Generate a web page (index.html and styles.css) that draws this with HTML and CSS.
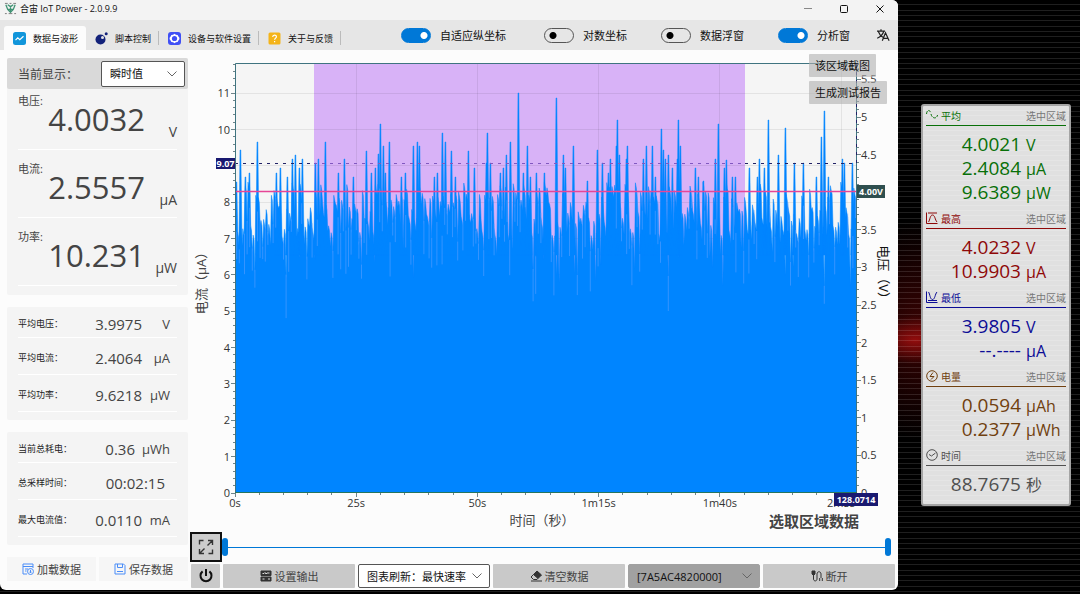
FILE: index.html
```html
<!DOCTYPE html>
<html lang="zh-CN">
<head>
<meta charset="utf-8">
<meta name="viewport" content="width=device-width, initial-scale=1">
<title>合宙 IoT Power - 2.0.9.9</title>
<link rel="stylesheet" href="styles.css">
</head>
<body>
<div class="desktop">
  <main class="window">
    <header class="titlebar">
      <svg class="logo" viewBox="0 0 14 14" fill="none" stroke="#3f9273"><path d="M1 1.5h3M6 1.5h2M10 1.5h3M1 12.5h2M5 12.5h4M11 12.5h2" stroke="#777"/><path d="M2 3l2 5 3 3 3-3 2-5M4 3l3 2 3-2M4 8h6M7 5v6" stroke-width="1.4"/></svg>
      <h1 class="title">合宙 IoT Power - 2.0.9.9</h1>
      <button class="win-btn" aria-label="最小化"><svg viewBox="0 0 10 10"><path d="M1 4.500h8" stroke="#888"/></svg></button>
      <button class="win-btn" aria-label="最大化"><svg viewBox="0 0 10 10"><rect x="1.500" y="1.500" width="7" height="7" rx="1" stroke="#111"/></svg></button>
      <button class="win-btn" aria-label="关闭"><svg viewBox="0 0 10 10"><path d="M1.500 1.500l7 7m0-7l-7 7" stroke="#111"/></svg></button>
    </header>

    <div class="toolbar">
      <nav class="tabs">
        <button class="tab tab-active"><svg class="tab-icon" viewBox="0 0 13 13"><rect width="13" height="13" rx="2.500" fill="#1296db"/><path d="M2.500 8.200l2.300-2.400 2 1.800 3.700-3.300" fill="none" stroke="#fff" stroke-width="1.200"/></svg>数据与波形</button>
        <button class="tab"><svg class="tab-icon" viewBox="0 0 13 13"><circle cx="5.500" cy="7.500" r="5" fill="#13227a"/><circle cx="7.500" cy="5.500" r="1.500" fill="#e6e6e6"/><circle cx="11.200" cy="1.800" r="1.500" fill="#13227a"/></svg>脚本控制</button>
        <button class="tab"><svg class="tab-icon" viewBox="0 0 13 13"><rect width="13" height="13" rx="3" fill="#4050f5"/><path d="M6.500 1.800l1.400 1 1.700.1.800 1.500 1 1.300v1.600l-1 1.300-.8 1.500-1.700.1-1.400 1-1.400-1-1.700-.1-.8-1.500-1-1.300V5.700l1-1.300.8-1.500 1.700-.1z" fill="#fff"/><circle cx="6.500" cy="6.500" r="2.600" fill="#4050f5"/></svg>设备与软件设置</button>
        <button class="tab"><svg class="tab-icon" viewBox="0 0 13 13"><rect x=".5" y=".5" width="12" height="12" rx="1.500" fill="#f4b41a"/><path d="M4.700 5c0-2.500 3.800-2.400 3.700-.2 0 1.300-1.800 1.400-1.800 3M6.600 9v1.300" fill="none" stroke="#fff" stroke-width="1.200"/></svg>关于与反馈</button>
      </nav>
      <div class="switches">
        <label class="switch switch-wide"><input type="checkbox" checked>自适应纵坐标</label>
        <label class="switch"><input type="checkbox">对数坐标</label>
        <label class="switch"><input type="checkbox">数据浮窗</label>
        <label class="switch"><input type="checkbox" checked>分析窗</label>
        <button class="lang" aria-label="语言"><svg viewBox="0 0 14 14" fill="none" stroke="#222" stroke-width="1.200"><path d="M1 3.200h8M5 1.300v1.900M2.300 3.500c1 2.900 3 5 5 6M7.700 3.500c-1 3.200-3.500 5.500-6.500 6.700M6.300 12.800l3.200-8 3.600 8M7.500 10.300h4.500"/></svg></button>
      </div>
    </div>

    <div class="content">
      <aside class="sidebar">
        <section class="card live">
          <div class="mode">
            <label for="mode">当前显示：</label>
            <div class="picker"><select id="mode"><option>瞬时值</option></select><svg viewBox="0 0 10 6"><path d="M.5.5L5 5 9.500.5"/></svg></div>
          </div>
          <div class="reading"><span class="name">电压:</span><span class="num">4.0032</span><span class="unit">V</span></div>
          <div class="reading"><span class="name">电流:</span><span class="num">2.5557</span><span class="unit">μA</span></div>
          <div class="reading"><span class="name">功率:</span><span class="num">10.231</span><span class="unit">μW</span></div>
        </section>
        <section class="card stats">
          <div class="stat"><span>平均电压：</span><b>3.9975</b><i>V</i></div>
          <div class="stat"><span>平均电流：</span><b>2.4064</b><i>μA</i></div>
          <div class="stat"><span>平均功率：</span><b>9.6218</b><i>μW</i></div>
        </section>
        <section class="card stats">
          <div class="stat stat-wide"><span>当前总耗电：</span><b>0.36</b><i>μWh</i></div>
          <div class="stat"><span>总采样时间：</span><b class="clock">00:02:15</b></div>
          <div class="stat"><span>最大电流值：</span><b>0.0110</b><i>mA</i></div>
        </section>
        <div class="files">
          <button><svg viewBox="0 0 12 12"><path d="M11 5V1H1v10h4M1 3.500h10M3 6h3M3 8h1.500"/><circle cx="8.500" cy="8.500" r="3"/><path d="M8.500 6.800v3M7.300 8.700l1.200 1.200 1.200-1.200"/></svg>加载数据</button>
          <button><svg viewBox="0 0 12 12"><path d="M1 1h8.500L11 2.500V11H1zM3.500 1v3.500h5V1M3 8.500h6"/></svg>保存数据</button>
        </div>
      </aside>

      <div class="workspace">
        <div class="plot">
          <svg class="chart" id="chart" viewBox="0 0 708 482" role="img" aria-label="电流与电压波形"></svg>
          <div class="overlay">
            <button>该区域截图</button>
            <button>生成测试报告</button>
          </div>
        </div>
        <div class="range-row">
          <button class="expand" aria-label="全屏"><svg viewBox="0 0 16 16"><path d="M1.500 5.500v-4h4M10 1.500h4.500V6M14.500 10.500v4h-4M6 14.500H1.500V10M14.500 1.500L9.500 6.500M1.500 14.500l5-5"/></svg></button>
          <div class="range">
            <input type="range" min="0" max="100" value="0" aria-label="起点">
            <input type="range" min="0" max="100" value="100" aria-label="终点">
          </div>
        </div>
        <div class="actions">
          <button class="power" aria-label="电源"><svg viewBox="0 0 16 16"><path d="M8 1v7M4.600 3.400a5.500 5.500 0 1 0 6.800 0" stroke-width="2"/></svg></button>
          <button><svg viewBox="0 0 12 12"><path d="M1 1h10v4.500H1zM1 7h10v4H1z" fill="#333"/><path d="M2.500 3.500h1.500l1-1 1 1.500 1-1h2.500M2.500 9h2M8 9h2" stroke="#ddd"/></svg>设置输出</button>
          <div class="picker"><select aria-label="图表刷新"><option>图表刷新：最快速率</option></select><svg viewBox="0 0 10 6"><path d="M.5.5L5 5 9.500.5"/></svg></div>
          <button><svg viewBox="0 0 12 12"><path d="M7 1l4.500 4L8 8.500l-4.500-4z" fill="#333"/><path d="M3.500 4.500L1 7l2.500 2.500H7l1-1M1 11h11"/></svg>清空数据</button>
          <div class="picker picker-dark"><select aria-label="设备"><option>[7A5AC4820000]</option></select><svg viewBox="0 0 10 6"><path d="M.5.5L5 5 9.500.5"/></svg></div>
          <button><svg viewBox="0 0 12 12"><path d="M1 1v3l1.500 1.500L4 4V1z" fill="#333"/><path d="M2.500 5v4c0 2.500 3.500 2.500 3.500 0V4c0-3 4-3 4 0v4M8.700 8v3M11.300 8v3"/></svg>断开</button>
        </div>
      </div>
    </div>
  </main>

  <aside class="analysis">
    <section class="group green">
      <h2><svg viewBox="0 0 12 12"><path d="M.5 5C1 0 4 1 5 4M5 5c1 5 6 5 6.500 1" stroke-dasharray="3 1"/></svg>平均<small>选中区域</small></h2>
      <p><b>4.0021</b>V</p><p><b>2.4084</b>μA</p><p><b>9.6389</b>μW</p>
    </section>
    <section class="group red">
      <h2><svg viewBox="0 0 12 12"><path d="M.5.5v11h11M2 1h9M2.500 10C4 8 4 3 6.500 3S9 8 11 10"/></svg>最高<small>选中区域</small></h2>
      <p><b>4.0232</b>V</p><p><b>10.9903</b>μA</p>
    </section>
    <section class="group blue">
      <h2><svg viewBox="0 0 12 12"><path d="M.5.5v11h11M2 9.500h9M2.500 1C4 3 4 8.500 6.500 8.500S9 3 11 1"/></svg>最低<small>选中区域</small></h2>
      <p><b>3.9805</b>V</p><p><b>--.----</b>μA</p>
    </section>
    <section class="group brown">
      <h2><svg viewBox="0 0 12 12"><circle cx="6" cy="6" r="5.300"/><path d="M7 2.500L4 6.500h4L5 9.500"/></svg>电量<small>选中区域</small></h2>
      <p><b>0.0594</b>μAh</p><p><b>0.2377</b>μWh</p>
    </section>
    <section class="group gray">
      <h2><svg viewBox="0 0 12 12"><circle cx="6" cy="6" r="5.300"/><path d="M3 5.500l2.500 1.500L9.500 4"/></svg>时间<small>选中区域</small></h2>
      <p><b>88.7675</b>秒</p>
    </section>
  </aside>
</div>
<script src="chart.js"></script>
</body>
</html>
```
FILE: styles.css
```css
* { box-sizing: border-box; }
body {
  margin: 0;
  font-family: "Open Sans", "Noto Sans CJK SC", sans-serif;
  color: #444;
  background: #000;
}
button, select, input { font: inherit; color: inherit; margin: 0; }
button { border: 0; padding: 0; background: none; }
svg { display: block; flex: none; fill: none; }
h1, h2, p { margin: 0; font-weight: 400; }
b, i { font-weight: 400; font-style: normal; }

.desktop {
  min-height: 100vh;
  display: grid;
  grid-template-columns: minmax(0, 1fr) 182px;
  align-items: start;
  padding-bottom: 4px;
  background:
    repeating-linear-gradient(transparent 0 4px, rgba(255, 255, 255, .12) 4px 5px, transparent 5px 10px, rgba(255, 255, 255, .12) 10px 11px, transparent 11px 15px, rgba(255, 255, 255, .12) 15px 16px),
    radial-gradient(ellipse 50px 24px at calc(100% - 165px) 340px, rgba(170, 16, 16, .8), transparent),
    radial-gradient(ellipse 80px 110px at calc(100% - 160px) 330px, #3a0303, transparent),
    #000;
}

/* window */
.window { background: #fcfcfc; border-radius: 0 6px 6px 6px; overflow: hidden; }
.titlebar { height: 20px; display: flex; align-items: center; padding: 0 5px 3px 4px; background: #f3f3f3; }
.logo { width: 13px; height: 13px; }
.title { flex: 1; margin-left: 3px; font-size: 9px; line-height: 16px; color: #111; }
.win-btn { width: 26px; margin-left: 10px; display: flex; justify-content: center; }
.win-btn svg { width: 10px; height: 10px; }

.toolbar { height: 30px; display: flex; justify-content: space-between; background: #e6e6e6; color: #111; }
.tabs { display: flex; align-items: flex-end; padding-left: 4px; }
.tab { position: relative; height: 24px; display: flex; align-items: center; gap: 7px; padding: 0 8px 0 9px; font-size: 9px; }
.tab + .tab::after { content: ""; position: absolute; right: 0; top: 5px; height: 14px; border-right: 1px solid #bbb; }
.tab-active { background: #fcfcfc; border-radius: 3px 3px 0 0; }
.tab-icon { width: 13px; height: 13px; }
.switches { display: flex; align-items: center; gap: 34px; padding: 0 8px 0 0; font-size: 11px; }
.switch { display: flex; align-items: center; gap: 9px; }
.switch-wide { margin-right: 4px; }
.switch input {
  appearance: none; width: 30px; height: 15px; border-radius: 8px; border: 1px solid #555;
  background: radial-gradient(circle at 8px 50%, #000 3px, transparent 4px);
}
.switch input:checked { border-color: #0078d7; background: radial-gradient(circle at 22px 50%, #fff 3px, #0078d7 4px); }
.lang { margin-left: -8px; }
.lang svg { width: 14px; height: 14px; }

.content { display: grid; grid-template-columns: 190px minmax(0, 1fr); }

/* readings */
.sidebar { padding: 8px 2px 9px 7px; display: flex; flex-direction: column; gap: 12px; }
.card { background: #f4f4f4; border-radius: 2px; padding-bottom: 8px; }
.mode { height: 31px; display: flex; align-items: center; justify-content: space-between; padding: 0 3px 0 11px; background: #d9d9d9; border-radius: 2px; font-size: 12px; }
.mode .picker { width: 84px; height: 26px; font-size: 11px; }
.picker { position: relative; border: 1px solid #555; border-radius: 2px; background: #fff; color: #111; }
.picker select { appearance: none; width: 100%; height: 100%; border: 0; padding: 0 20px 0 8px; background: none; display: block; }
.picker svg { position: absolute; right: 7px; top: 50%; width: 10px; height: 6px; margin-top: -3px; stroke: #666; pointer-events: none; }
.reading { height: 68px; margin: 0 11px; padding-top: 7px; display: grid; grid-template-columns: 32px 95px 1fr; border-bottom: 1px solid #fff; white-space: nowrap; }
.reading .name { margin-top: 3px; font-size: 11px; line-height: 18px; }
.reading .num { font-size: 31px; line-height: 60px; text-align: right; justify-self: end; }
.reading .unit { font-size: 14px; line-height: 20px; margin-top: 33px; text-align: right; }
.live { padding-bottom: 9px; }
.mode + .reading { height: 61px; padding-top: 0; }
.stat { height: 37px; margin: 0 11px; padding-top: 4px; display: grid; grid-template-columns: 1fr auto 34px; align-items: center; line-height: 20px; border-bottom: 1px solid #fff; white-space: nowrap; }
.stat:first-child { height: 31px; }
.stat-wide { grid-template-columns: 1fr auto 41px; }
.stat span { font-size: 9px; color: #222; }
.stat b { font-size: 15px; margin-right: 1px; }
.stat i { font-size: 13px; text-align: right; margin-right: 7px; justify-self: end; }
.stat .clock { grid-column: 2 / 4; margin-right: 12px; }
.files { display: grid; grid-template-columns: 1fr 1fr; gap: 3px; }
.files button { height: 24px; display: flex; align-items: center; justify-content: center; gap: 3px; background: #f6f6f6; font-size: 11px; }
.files svg { width: 12px; height: 12px; stroke: #4a8df8; }

/* chart */
.plot { position: relative; }
.chart { width: 100%; height: auto; }
.chart .frame { stroke: #3f7480; }
.chart .grid { stroke: #000; stroke-opacity: .07; }
.chart .tick { stroke: #70858a; }
.chart .area { fill: #0085ff; stroke: #0085ff; stroke-width: .7; stroke-opacity: .7; }
.chart .streak { stroke: #5fa0ff; stroke-width: .8; opacity: .7; }
.chart .label { font-size: 11px; fill: #333; }
.chart .axis-title { font-size: 13px; fill: #444; }
.chart .voltage { fill: #111; }
.chart .caption { font-size: 15px; font-weight: 700; fill: #444; }
.chart .badge { font-size: 9px; font-weight: 700; fill: #fff; }
.overlay { position: absolute; left: 87%; top: 4px; display: flex; flex-direction: column; align-items: flex-start; gap: 4px; margin-left: 3px; }
.overlay button { height: 23px; padding: 0 6px; border-radius: 1px; background: rgba(175, 175, 175, .6); color: #111; font-size: 11px; line-height: 20px; white-space: nowrap; }

.range-row { display: grid; grid-template-columns: 32px 1fr; height: 30px; padding-right: 7px; }
.expand { display: grid; place-items: center; border: 2px solid #111; background: #ccc; }
.expand svg { width: 16px; height: 16px; stroke: #333; stroke-width: 1.4; }
.range { display: grid; align-items: center; background: linear-gradient(#0078d7, #0078d7) center / 100% 1px no-repeat; }
.range input { grid-area: 1 / 1; width: 100%; height: 18px; appearance: none; background: none; pointer-events: none; }
.range input::-webkit-slider-thumb { appearance: none; width: 6px; height: 18px; border-radius: 3px; background: #0078d7; pointer-events: auto; }

.actions { display: grid; grid-template-columns: 29px repeat(5, minmax(0, 1fr)); gap: 3px; padding: 2px 3px 2px 1px; font-size: 11px; }
.actions > * { height: 24px; }
.actions > button { display: flex; align-items: center; justify-content: center; gap: 3px; background: #c9c9c9; border-radius: 1px; }
.actions > button svg { width: 12px; height: 12px; stroke: #333; }
.actions > .power svg { width: 16px; height: 16px; stroke: #111; }
.actions .picker-dark { background: #a1a1a1; border-color: #a1a1a1; }

/* analysis panel */
.analysis {
  margin: 104px 9px 0 23px; padding: 0 3px; border: 2px solid #a4a4a4; border-radius: 3px;
  background: repeating-linear-gradient(#e0e0e0 0 4px, #e5e5e5 4px 5px);
}
.group { padding-bottom: 5px; }
.group h2 { height: 20px; display: flex; align-items: center; gap: 3px; margin-bottom: 6px; padding-bottom: 1px; border-bottom: 1px solid; font-size: 10px; }
.group h2 svg { width: 12px; height: 12px; stroke: currentColor; }
.group small { margin-left: auto; font-size: 10px; color: #777; }
.group p { display: grid; grid-template-columns: 95px 1fr; gap: 5px; align-items: baseline; height: 24px; line-height: 24px; font-size: 16px; }
.group b { font-size: 19px; text-align: right; }
.green { color: #087008; }
.red { color: #8f0808; }
.blue { color: #0c0c96; }
.brown { color: #70400f; }
.gray { color: #505050; padding-bottom: 8px; }
```
FILE: chart.js
```js
const svg = document.getElementById('chart');
const LEFT = 45, RIGHT = 667, TOP = 14, BOTTOM = 443;
const AMP = 36.35, VOLT = 75.2, STEP = 121.2;
const parts = [];
const line = (x1, y1, x2, y2, cls) =>
  parts.push(`<line x1="${x1}" y1="${y1}" x2="${x2}" y2="${y2}" class="${cls}"/>`);
const text = (x, y, value, cls, extra = '') =>
  parts.push(`<text x="${x}" y="${y}" class="${cls}" ${extra}>${value}</text>`);
const crisp = v => Math.floor(v) + 0.5;

// Background, grid and selected region
parts.push(`<rect x="${LEFT}" y="${TOP}" width="${RIGHT - LEFT}" height="${BOTTOM - TOP}" fill="#f5f5f5"/>`);
parts.push('<rect x="124" y="14" width="431" height="429" fill="#d8b2f7"/>');
for (let i = 1; i < 12; i++) line(LEFT, crisp(BOTTOM - i * AMP), RIGHT, crisp(BOTTOM - i * AMP), 'grid');
for (let i = 1; i < 6; i++) line(crisp(LEFT + i * STEP), TOP, crisp(LEFT + i * STEP), BOTTOM, 'grid');

// Current samples: noise floor plus recorded peaks, as x:y pairs
const peaks = `46:132 50:100 55:127 59:123 67:92 86:123 90:118 97:127 102:109 105:105 109:118 112:109
125:113 128:109 135:92 148:123 154:109 163:127 176:101 181:123 185:118 188:104 190:74 193:96 195:123 199:92
211:127 215:123 223:96 227:92 229:96 244:127 247:123 252:83 255:92 261:101 265:127 278:101 284:118 296:113
297:83 300:113 310:123 313:118 316:105 320:92 328:43 333:123 337:96 340:127 346:123 354:123 366:48 373:105
375:118 383:96 397:131 407:100 412:113 418:123 420:109 426:96 427:70 429:105 436:109 437:96 453:109 456:96
462:96 465:127 471:79 473:100 475:109 478:105 482:118 487:109 488:70 490:96 505:118 508:127 513:131 525:109
528:74 534:118 536:110 542:127 545:127 559:118 567:127 569:109 574:118 578:70 588:105 595:78 604:113 613:113
626:127 631:87 634:61 638:127 652:109 654:113 662:113`.split(/\s+/).map(p => p.split(':').map(Number));
let seed = 91;
const rnd = () => (seed = (seed * 16807) % 2147483647) / 2147483647;
let area = `M${LEFT} ${BOTTOM}`;
let streaks = '';
for (let x = LEFT; x <= RIGHT; x += 2.6) {
  const high = 132 + rnd() * 54;
  const low = high + 8 + rnd() * rnd() * 62;
  area += `L${x.toFixed(1)} ${high.toFixed(1)}L${(x + 0.9).toFixed(1)} ${(high + 5).toFixed(1)}L${(x + 1.7).toFixed(1)} ${low.toFixed(1)}`;
  if (rnd() > 0.5) streaks += `M${(x + 1.7).toFixed(1)} ${(low - 4).toFixed(1)}V${(low + 8 + rnd() * 32).toFixed(1)}`;
}
area += `V${BOTTOM}Z`;
area += peaks.map(([x, y]) => `M${x} ${y}h.8L${x + 2.2} 205h-3.400Z`).join('');
parts.push(`<clipPath id="inside"><rect x="${LEFT}" y="${TOP}" width="${RIGHT - LEFT}" height="${BOTTOM - TOP}"/></clipPath>`);
parts.push(`<g clip-path="url(#inside)"><path class="area" d="${area}"/><path class="streak" d="${streaks}"/></g>`);

// Reference lines
parts.push('<path d="M124 113.5H555" stroke="#8158c0" stroke-dasharray="3 5"/>');
parts.push('<path d="M45 113.5H124M555 113.5H667" stroke="#222266" stroke-dasharray="3 5"/>');
parts.push('<path d="M45 141.5H667" stroke="#e64696" stroke-width="1.5"/>');
parts.push('<path d="M45.5 443V13.500H666.500V443" class="frame"/><path d="M45 442.500H667" stroke="#26745e"/>');
parts.push('<path d="M666.500 14V113" stroke="#222266" stroke-dasharray="3 5"/>');

// Axes
for (let i = 0; i <= 11; i++) {
  const y = BOTTOM - i * AMP;
  line(41, crisp(y), 45, crisp(y), 'tick');
  for (let k = 1; k < 5; k++) if (y - k * 7.27 > TOP) line(43, crisp(y - k * 7.27), 45, crisp(y - k * 7.27), 'tick');
  if (i !== 9) text(40, y + 4, i, 'label', 'text-anchor="end"');
}
for (let i = 0; i <= 11; i++) {
  const y = BOTTOM - i * VOLT / 2;
  line(667, crisp(y), 671, crisp(y), 'tick');
  for (let k = 1; k < 5; k++) if (y - k * 7.52 > TOP) line(667, crisp(y - k * 7.52), 669, crisp(y - k * 7.52), 'tick');
  if (i !== 8) text(671, y + 4, i / 2, 'label');
}
['0s', '25s', '50s', '1m15s', '1m40s', '2m5s'].forEach((name, i) => {
  const x = LEFT + i * STEP;
  line(crisp(x), BOTTOM, crisp(x), BOTTOM + 4, 'tick');
  for (let k = 1; k < 5; k++) if (x + k * 24.2 < RIGHT) line(crisp(x + k * 24.2), BOTTOM, crisp(x + k * 24.2), BOTTOM + 2, 'tick');
  text(x, 457, name, 'label', 'text-anchor="middle"');
});
text(0, 0, '电流（μA）', 'axis-title', 'text-anchor="middle" transform="translate(16 230) rotate(-90)"');
text(0, 0, '电压（V）', 'axis-title voltage', 'text-anchor="middle" transform="translate(689 225) rotate(90)"');
text(352, 475, '时间（秒）', 'axis-title', 'text-anchor="middle"');
text(579, 477, '选取区域数据', 'caption');

// Cursor badges
const badge = (x, y, w, h, fill, value) => {
  parts.push(`<rect x="${x}" y="${y}" width="${w}" height="${h}" fill="${fill}"/>`);
  text(x + w / 2, y + h / 2 + 3, value, 'badge', 'text-anchor="middle"');
};
badge(26, 108, 19, 11, '#191970', '9.07');
badge(667, 135, 28, 13, '#2f4f4f', '4.00V');
badge(644, 443, 44, 13, '#191970', '128.0714');

svg.innerHTML = parts.join('');
```
